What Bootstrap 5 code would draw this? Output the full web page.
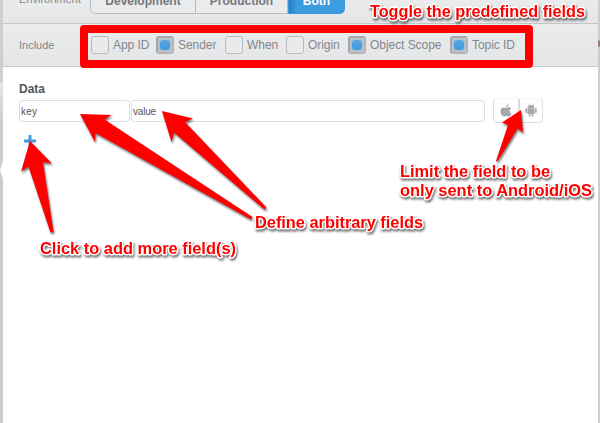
<!DOCTYPE html>
<html lang="en">
<head>
<meta charset="utf-8">
<meta name="viewport" content="width=device-width, initial-scale=1">
<title>Data fields</title>
<link href="https://cdn.jsdelivr.net/npm/bootstrap@5.3.0/dist/css/bootstrap.min.css" rel="stylesheet">
<style>
  body { width: 600px; height: 423px; overflow: hidden; background: #cbcbcb; font-family: "Liberation Sans", Arial, sans-serif; font-size: 12px; line-height: 16px; color: #83878d; }
  .edge-left { width: 3px; flex: none; background: linear-gradient(#cfcfcf 0 82px, #e6e6e6 83px, #c9c9c9 128px, #cccccc 130px); }
  .edge-right { width: 2px; flex: none; background: linear-gradient(#cdcdcd 0 40px, #937c72 41px 46px, #cdcdcd 47px); }
  .notch { left: 0; top: 161px; width: 3px; height: 18px; background: #fff; clip-path: polygon(0 50%, 100% 0, 100% 100%); }
  .env-row { height: 24px; border-bottom: 1px solid #c3c5c8; background: linear-gradient(#eaebec, #e4e6e8); }
  .inc-row { height: 43px; border-bottom: 1px solid #c4cad0; background: linear-gradient(#ebecec, #e3e5e7); }
  .row-label { width: 72px; flex: none; font-size: 11px; }
  .env-row .row-label { width: 71px; margin-top: -9px; }
  .env-group { margin-top: -16px; height: 30px; }
  .env-group .btn { height: 30px; padding: 3px 0 0; font-size: 12px; line-height: 18px; font-weight: 700; color: #74787e; border: 1px solid #b9bbbe; border-radius: 0 0 5px 5px; background: #eaebec; display: block; }
  .env-group .btn.on { color: #fff; border-color: #3b96da; background: linear-gradient(90deg, #2b7fbd, #3d9be0 8px); }
  .env-a { width: 106px; } .env-b { width: 92px; } .env-c { width: 57px; }
  .tick { width: 18px; height: 18px; flex: none; border: 1px solid #b9bbbf; border-radius: 3px; background: #e9eaeb; }
  .tick.on { border: 2px solid #a5a8ac; border-right-color: #b2b5b8; border-bottom-color: #b2b5b8; background: #c1c4c7; padding: 1px; }
  .tick.on::after { content: ""; display: block; width: 12px; height: 12px; border: 1px solid #a9bdcc; border-radius: 4px; background: linear-gradient(#5aaae3, #3e9ae0); }
  .tick-item { height: 18px; gap: 4px; white-space: nowrap; flex: none; letter-spacing: -.05px; }
  .w1 { width: 65px; } .w2 { width: 69px; } .w3 { width: 61px; } .w4 { width: 62px; } .w5 { width: 102px; }
  .data-area { padding: 14px 0 0 16px; }
  .data-title { font-size: 12px; line-height: 16px; font-weight: 700; color: #53565a; margin-bottom: 3px; }
  .data-area .form-control { height: 22px; padding: 0 1px; font-size: 10px; line-height: 20px; color: #555; border: 1px solid #dedede; border-radius: 3px; }
  .in-key { width: 111px; letter-spacing: .2px; } .in-val { width: 354px; letter-spacing: -.2px; margin-left: 1px; }
  .os-group { width: 50px; height: 25px; margin: -2px 0 0 8px; border: 1px solid #dcdcdd; border-top-color: #f6f6f6; border-radius: 4px; }
  .os-group .os { width: 24px; }
  .os + .os { border-left: 2px solid #dcdcdd; }
  .add-field { width: 12px; height: 12px; margin: 12px 0 0 5px; display: block; }
  .notes { left: 0; top: 0; width: 600px; height: 423px; }
  .notes text { font: 700 16px "Liberation Sans", Arial, sans-serif; fill: #f00; stroke: #fff; stroke-width: 3px; stroke-linejoin: round; paint-order: stroke; }
  .drop { filter: drop-shadow(1px 2px 1.2px rgba(0,0,0,.55)); }
</style>
</head>
<body class="position-relative">
<div class="d-flex h-100">
  <div class="edge-left"></div>
  <main class="flex-grow-1 bg-white">
    <div class="env-row d-flex align-items-start ps-3">
      <span class="row-label">Environment</span>
      <div class="env-group d-flex">
        <button class="btn env-a rounded-end-0">Development</button>
        <button class="btn env-b rounded-0 border-start-0">Production</button>
        <button class="btn on env-c rounded-start-0">Both</button>
      </div>
    </div>
    <div class="inc-row d-flex align-items-center ps-3">
      <span class="row-label">Include</span>
      <div class="tick-item w1 d-flex align-items-center"><i class="tick"></i>App ID</div>
      <div class="tick-item w2 d-flex align-items-center"><i class="tick on"></i>Sender</div>
      <div class="tick-item w3 d-flex align-items-center"><i class="tick"></i>When</div>
      <div class="tick-item w4 d-flex align-items-center"><i class="tick"></i>Origin</div>
      <div class="tick-item w5 d-flex align-items-center"><i class="tick on"></i>Object Scope</div>
      <div class="tick-item d-flex align-items-center"><i class="tick on"></i>Topic ID</div>
    </div>
    <section class="data-area">
      <h2 class="data-title">Data</h2>
      <div class="d-flex align-items-start">
        <input class="form-control in-key" value="key" aria-label="Key">
        <input class="form-control in-val" value="value" aria-label="Value">
        <div class="os-group d-flex">
          <span class="os d-flex align-items-center justify-content-center"><svg width="12" height="13" viewBox="0 0 12 13" fill="#a5a7ac"><path d="M8.6.3C8.7 1.8 7.500 3 6.100 3 6 1.600 7.200.5 8.600.3ZM6.200 3.900C7 3.900 7.700 3.200 8.900 3.300 9.900 3.300 10.700 3.800 11.200 4.500 9 5.800 9.300 8.500 11.500 9.400 10.900 10.900 9.900 12.600 8.600 12.600 7.700 12.600 7.300 12.100 6.300 12.100 5.300 12.100 4.900 12.600 4 12.600 2.200 12.600.4 9.700.4 7.100.4 4.800 1.900 3.400 3.600 3.400 4.700 3.400 5.400 3.900 6.200 3.900Z"/></svg></span>
          <span class="os d-flex align-items-center justify-content-center"><svg width="12" height="13" viewBox="0 0 12 13" fill="#a5a7ac"><path d="M2.500 4C2.600 2.700 3.200 1.900 4 1.400L3.300.4 3.700.1 4.500 1.200Q6 .7 7.500 1.200L8.300.1 8.700.4 8 1.400C8.800 1.900 9.400 2.700 9.500 4ZM2.500 4.300H9.500V10H8.200V12.500H6.600V10H5.400V12.500H3.800V10H2.500Z"/><rect x=".3" y="4.300" width="1.800" height="4.700" rx=".8"/><rect x="9.900" y="4.300" width="1.800" height="4.700" rx=".8"/></svg></span>
        </div>
      </div>
      <svg class="add-field" viewBox="0 0 12 12"><path d="M4.500 0H7.500V4.500H12V7.500H7.500V12H4.500V7.500H0V4.500H4.500Z" fill="#4399dc"/></svg>
    </section>
  </main>
  <div class="edge-right"></div>
</div>
<div class="notch position-absolute"></div>
<svg class="notes position-absolute" viewBox="0 0 600 423">
  <rect x="84" y="29" width="445" height="35" fill="none" stroke="#f00" stroke-width="8" stroke-linejoin="round"/>
  <g class="drop" fill="#f00">
    <path d="M80 114 111.500 115 104.500 119.500 252.500 217 251 219.500 95.500 133 95 142Z"/>
    <path d="M162 111 193 118.500 185 122 266.500 207.500 264.500 209.500 174 132.500 171.500 142Z"/>
    <path d="M30 141 52 163.500 43 162 53.500 232 50.500 232.500 28.500 166.500 21 171.500Z"/>
    <path d="M521 110 523 132.500 517.500 128.500 497.500 161.500 496 161 508 125 502 122.500Z"/>
  </g>
  <g class="drop">
    <text x="370" y="17" textLength="215" lengthAdjust="spacingAndGlyphs">Toggle the predefined fields</text>
    <text x="400" y="176.500" textLength="150" lengthAdjust="spacingAndGlyphs">Limit the field to be</text>
    <text x="400" y="195.500" textLength="192" lengthAdjust="spacingAndGlyphs">only sent to Android/iOS</text>
    <text x="255" y="228" textLength="168" lengthAdjust="spacingAndGlyphs">Define arbitrary fields</text>
    <text x="40" y="253.500" textLength="196" lengthAdjust="spacingAndGlyphs">Click to add more field(s)</text>
  </g>
</svg>
<script src="https://cdn.jsdelivr.net/npm/bootstrap@5.3.0/dist/js/bootstrap.bundle.min.js"></script>
</body>
</html>
